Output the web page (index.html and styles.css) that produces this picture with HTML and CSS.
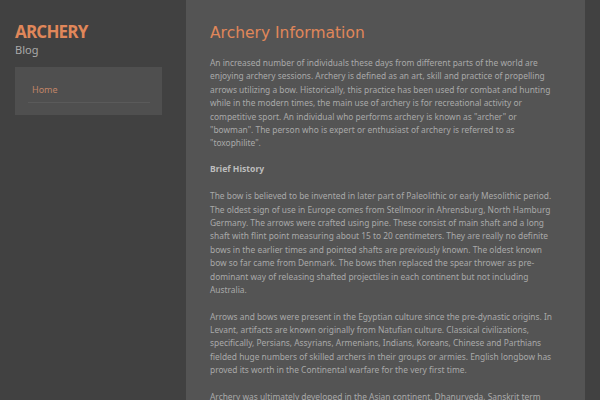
FILE: index.html
```html
<!DOCTYPE html>
<html lang="en">
  <head>
    <meta charset="UTF-8" />
    <meta name="viewport" content="width=device-width, initial-scale=1.0" />
    <title>Archery Blog</title>
    <link rel="stylesheet" href="styles.css">
  </head>
  <body>
    <div class="page">
      <aside class="sidebar">
        <div class="brand">
          <h1 class="logo">ARCHERY</h1>
          <p class="tagline">Blog</p>
        </div>
        <nav class="menu">
          <a href="#" class="menu-item">Home</a>
        </nav>
      </aside>

      <main class="content">
        <h2>Archery Information</h2>
        <p>An increased number of individuals these days from different parts of the world are enjoying archery sessions. Archery is defined as an art, skill and practice of propelling arrows utilizing a bow. Historically, this practice has been used for combat and hunting while in the modern times, the main use of archery is for recreational activity or competitive sport. An individual who performs archery is known as "archer" or "bowman". The person who is expert or enthusiast of archery is referred to as "toxophilite".</p>
        <h3>Brief History</h3>
        <p>The bow is believed to be invented in later part of Paleolithic or early Mesolithic period. The oldest sign of use in Europe comes from Stellmoor in Ahrensburg, North Hamburg Germany. The arrows were crafted using pine. These consist of main shaft and a long shaft with flint point measuring about 15 to 20 centimeters. They are really no definite bows in the earlier times and pointed shafts are previously known. The oldest known bow so far came from Denmark. The bows then replaced the spear thrower as pre-dominant way of releasing shafted projectiles in each continent but not including Australia.</p>
        <p>Arrows and bows were present in the Egyptian culture since the pre-dynastic origins. In Levant, artifacts are known originally from Natufian culture. Classical civilizations, specifically, Persians, Assyrians, Armenians, Indians, Koreans, Chinese and Parthians fielded huge numbers of skilled archers in their groups or armies. English longbow has proved its worth in the Continental warfare for the very first time.</p>
        <p>Archery was ultimately developed in the Asian continent. Dhanurveda, Sanskrit term which means archery, this generally pertains to martial arts. In East Asia, Kingdom of Goguryeo, one of the Three Kingdoms of Korea, was well known for its regiments of exceptionally skilled archers.</p>
      </main>
    </div>
  </body>
</html>
```

FILE: styles.css
```css
/* Base */
body {
  margin: 0;
  background-color: #414141;
  font-family: "Noto Sans", "DejaVu Sans", sans-serif;
  height: 100vh;
  overflow: hidden;
}

.page {
  display: flex;
  align-items: stretch;
  min-height: 100vh;
}

/* Sidebar */
.sidebar {
  width: 186px;
  flex-shrink: 0;
  padding: 22px 0 0 15px;
  box-sizing: border-box;
}

.logo {
  margin: 0;
  font-family: "Open Sans", sans-serif;
  font-weight: 700;
  font-size: 17px;
  letter-spacing: -0.8px;
  line-height: 20px;
  color: #e0875a;
}

.tagline {
  margin: 0;
  font-size: 11px;
  line-height: 15px;
  color: #aaaaaa;
}

.menu {
  margin-top: 10px;
  width: 147px;
  background-color: #4f4f4f;
  padding: 17px 12px 12px 13px;
  box-sizing: border-box;
}

.menu-item {
  display: block;
  padding: 0 4px 6px;
  font-size: 9px;
  line-height: 12px;
  color: #c08568;
  text-decoration: none;
  border-bottom: 1px solid #5a5a5a;
}

/* Main column */
.content {
  width: 399px;
  flex-shrink: 0;
  background-color: #545454;
  padding: 22px 26.5px 0 24px;
  box-sizing: border-box;
  color: #a9a9a9;
}

.content h2 {
  margin: 0 0 12px;
  font-family: "DejaVu Sans", sans-serif;
  font-weight: normal;
  font-size: 15.5px;
  line-height: 22px;
  color: #e0875a;
}

.content h3 {
  margin: 0 0 13px;
  font-size: 8.6px;
  line-height: 13.4px;
  color: #bdbdbd;
}

.content p {
  margin: 0 0 13px;
  font-size: 8.4px;
  line-height: 13.4px;
}
```
